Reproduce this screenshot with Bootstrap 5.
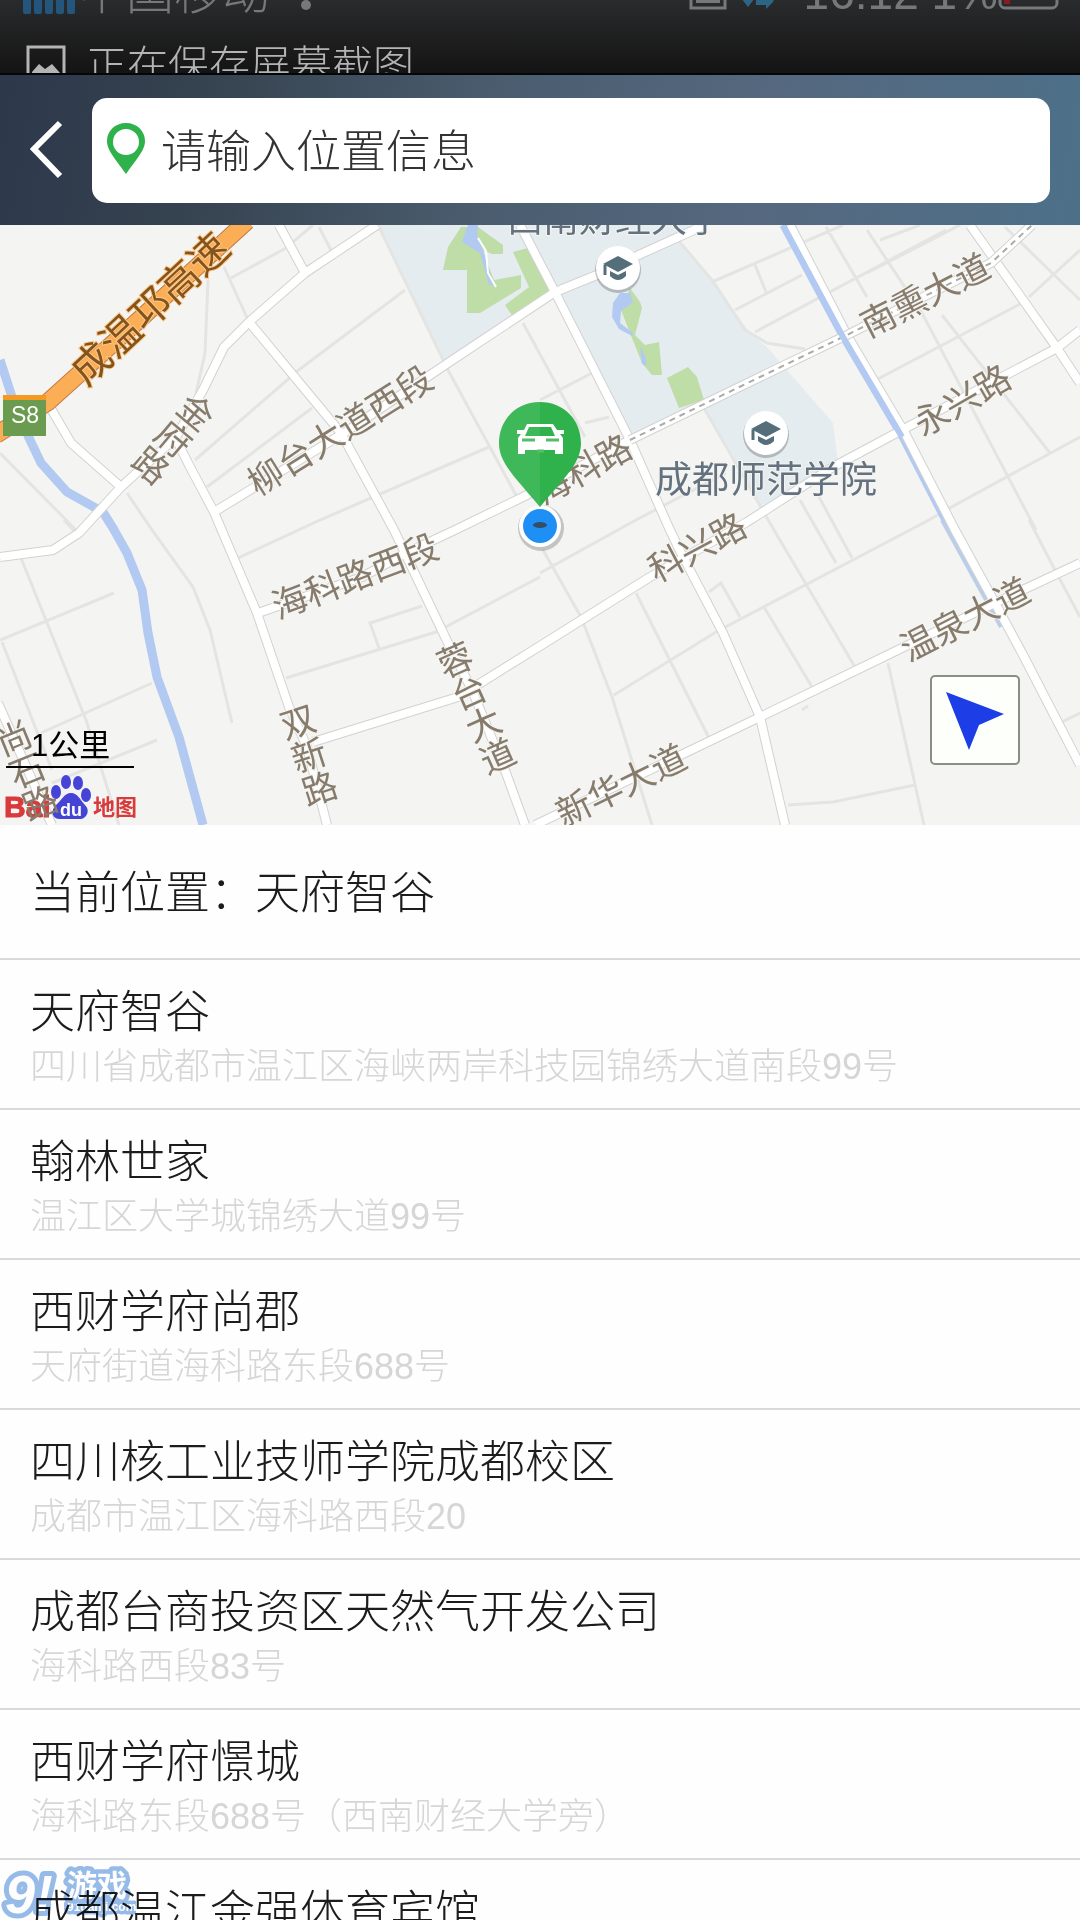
<!DOCTYPE html>
<html lang="zh-CN">
<head>
<meta charset="utf-8">
<meta name="viewport" content="width=device-width, initial-scale=1">
<title>位置选择</title>
<link rel="stylesheet" href="https://cdn.jsdelivr.net/npm/bootstrap@5.3.0/dist/css/bootstrap.min.css">
<style>
  body { font-family: "Liberation Sans", "Noto Sans CJK SC", sans-serif; font-weight: 300; color: #1c1c1c; background: #fefefe; }
  .statusbar { height: 75px; background: linear-gradient(#2a2b2d, #141414); border-bottom: 2px solid #050608; }
  .status-line { height: 54px; margin-top: -34px; padding: 0 20px 0 22px; font-size: 46px; line-height: 54px; color: #77787a; }
  .carrier { font-size: 48px; }
  .notice-line { height: 60px; margin-top: 16px; padding: 0 26px; gap: 20px; font-size: 41px; line-height: 60px; color: #b4b4b4; }
  .topbar { height: 150px; padding: 0 30px; gap: 28px; background: linear-gradient(100deg, #2d384b 0%, #35424f 18%, #4a5c6e 45%, #55687f 70%, #4d7089 100%); }
  .search-box { height: 105px; padding: 0 15px; gap: 16px; border-radius: 15px; background: #fff; }
  .search-field { height: 66px; font-size: 45px; line-height: 60px; font-weight: 300; color: #333; }
  .search-box .search-field { padding: 6px 0 0; }
  .search-field::placeholder { color: #333; opacity: 1; }
  .map-view svg.map-art { width: 100%; height: auto; }
  .map-art text { font-size: 35px; font-weight: 400; }
  .road-case { fill: none; stroke: #d2d2d0; stroke-linejoin: round; }
  .road-fill { fill: none; stroke: #fff; stroke-linejoin: round; }
  .lane { fill: none; stroke: #e4e4e2; stroke-width: 3; }
  .road-name { fill: #877b6c; stroke: #f4f4f2; stroke-width: 2; paint-order: stroke; text-anchor: middle; }
  .place-name { fill: #64717f; stroke: #f4f4f2; stroke-width: 2; paint-order: stroke; text-anchor: middle; }
  .map-art .scale-text { font-size: 31px; fill: #000; }
  .locate-btn { position: absolute; right: 60px; bottom: 60px; width: 90px; height: 90px; border: 2px solid #8c8d84; border-radius: 5px; background: #fdfffa; }
  .here { height: 135px; padding: 5px 30px 0; font-size: 45px; line-height: 54px; border-bottom: 2px solid #d9d9d9; }
  .place-row { padding: 26px 30px 14px; border-bottom: 2px solid #d9d9d9; color: #1c1c1c; }
  .place-title { font-size: 45px; line-height: 54px; }
  .place-addr { font-size: 36px; line-height: 54px; color: #d6d6d6; }
  .site-mark { position: absolute; left: 0; bottom: 0; mix-blend-mode: multiply; }
</style>
<script src="https://cdn.jsdelivr.net/npm/bootstrap@5.3.0/dist/js/bootstrap.bundle.min.js"></script>
</head>
<body>
<div class="vh-100 overflow-hidden position-relative">

  <div class="statusbar overflow-hidden">
    <div class="status-line d-flex align-items-center justify-content-between">
      <div class="d-flex align-items-center">
        <svg width="56" height="54" viewBox="0 0 56 54" fill="#24557c"><rect x="1" y="10" width="8" height="38" rx="2"/><rect x="12" y="10" width="8" height="38" rx="2"/><rect x="23" y="10" width="8" height="38" rx="2"/><rect x="34" y="10" width="8" height="38" rx="2"/><rect x="45" y="10" width="8" height="38" rx="2"/></svg>
        <span class="carrier">中国移动</span>
        <svg class="ms-3" width="30" height="54" viewBox="0 0 30 54" fill="#77787a"><circle cx="20" cy="39" r="5"/></svg>
      </div>
      <div class="d-flex align-items-center">
        <svg width="92" height="54" viewBox="0 0 92 54"><path d="M3 8h34v34H3z" fill="none" stroke="#77787a" stroke-width="3"/><path d="M8 10h24v27H8z" fill="#77787a"/><path d="M50 28h20l-10 13zM68 33h10v-6l8 8-8 8v-4H68z" fill="#2d6585"/></svg>
        <span class="ms-4">16:12 1%</span>
        <svg width="62" height="54" viewBox="0 0 62 54"><rect x="2" y="12" width="57" height="30" rx="5" fill="none" stroke="#77787a" stroke-width="3"/><path d="M6 16h6v22H6z" fill="#8b1a22"/></svg>
      </div>
    </div>
    <div class="notice-line d-flex">
      <svg class="mt-2" width="40" height="44" viewBox="0 0 40 44"><path d="M2 3h36v36H2z" fill="none" stroke="#b4b4b4" stroke-width="3"/><path d="M6 34v-6l7-8 6 5 7-5 8 9v5z" fill="#b4b4b4"/></svg>
      <span>正在保存屏幕截图</span>
    </div>
  </div>

  <header class="topbar d-flex align-items-center">
    <a href="#" aria-label="返回" class="d-flex">
      <svg width="34" height="60" viewBox="0 0 34 60"><path d="M30 3L4 29l26 27" fill="none" stroke="#fff" stroke-width="6"/></svg>
    </a>
    <div class="search-box d-flex align-items-center flex-grow-1">
      <label for="place-search" class="d-flex" aria-label="位置">
        <svg width="38" height="56" viewBox="0 0 38 56"><path fill="#2fb24c" fill-rule="evenodd" d="M19 1C8 1 0 9 0 19c0 9 7 16 19 33 12-17 19-24 19-33C38 9 30 1 19 1zm0 6a13 13 0 1 1 0 26 13 13 0 0 1 0-26z"/></svg>
      </label>
      <input id="place-search" type="text" class="search-field form-control border-0 shadow-none bg-transparent" placeholder="请输入位置信息">
    </div>
  </header>

  <section class="map-view position-relative overflow-hidden">
    <svg class="map-art d-block" viewBox="0 0 1080 600">
      <defs>
        <g id="school">
          <circle cy="2" r="23" fill="#000" opacity=".22"/><circle r="22" fill="#fff"/>
          <path d="M-15-4L0-12 15-4 0 4z" fill="#546e7a"/><path d="M-8 3v5q8 8 16 0V3L0 7z" fill="#546e7a"/><path d="M-13-3v10" stroke="#546e7a" stroke-width="3"/>
        </g>
        <g id="streets">
          <path d="M377 0L305 48 249 97 224 122 203 165 176 212 121 262 79 308 53 325 0 332M279 0L305 48"/>
          <path d="M249 97L293 150 341 208 365 252 394 305 448 418 472 465 506 548 525 600"/>
          <path d="M214 287L255 262 344 208 448 138 555 67 597 50 643 28 705 0"/>
          <path d="M176 214L189 240 214 287 257 388 289 482 307 522 327 600M50 182L71 218 121 262"/>
          <path d="M258 388L362 352 406 328 455 305 523 272 630 215"/>
          <path d="M520 0L555 67 630 215 669 303 681 328 723 408 760 492 785 600"/>
          <path d="M313 517L458 472 540 421 650 352 747 297 833 242 902 205 1057 123 1080 105"/>
          <path d="M790 0L848 112 905 208 955 305 995 378 1022 428 1080 540M970 0L1057 123 1080 158"/>
          <path d="M535 600L685 528 760 492 902 423 995 378 1080 338M-2 478L52 600"/>
        </g>
      </defs>
      <rect width="1080" height="600" fill="#f4f4f2"/>
      <path fill="#e4ecf0" d="M378 0L446 137 555 67 630 215 704 182 740 242 760 282 838 237 833 198 767 122 750 108 712 55 678 15 702 0z"/>
      <path fill="#bfdda6" d="M461 2L448 22 443 45H467V88H480L521 63V50L494 55 482 25 492 29H503V20L478 2zM513 27L532 22 540 45 552 68 513 92 505 80 529 62zM630 63L640 77 642 83 635 110 645 120 659 117 662 150H652L642 138 630 108 621 85zM667 153L688 142 697 152 704 175 679 183z"/>
      <path fill="#b2c9f1" d="M468 0h10l-1 11 6 14 6 18 4 18-4-1-9-32-18-11z"/>
      <path d="M478 13L486 26 488 48 496 62" fill="none" stroke="#fff" stroke-width="2"/>
      <path fill="#b2c9f1" d="M620 68h10l3 9-12 9-1 12 13 10-1 3-13-7-7-12 1-14zM640 121l6 12v8l-4-2z"/>
      <path d="M0 135L12 172 29 213 41 238 67 267 103 287 113 303 127 328 142 365 148 408 157 452 179 512 203 600" fill="none" stroke="#b2c9f1" stroke-width="9"/>

      <g class="lane">
        <path d="M231 53L286 23 313 0M224 42L249 97M319 2L332 27M208 55L205 128 196 168M296 147L405 65M195 235L293 150M207 262L312 183M378 0L448 145 517 272M238 333L320 295 489 222"/>
        <path d="M0 228L76 305M127 268L152 305 193 362 210 405 232 498M21 333L86 495 119 600M0 415L114 368M2 417L52 545M41 508L152 458M52 558L157 515M286 453L436 407 540 352M379 423L370 398 422 381M64 295L76 308"/>
        <path d="M540 348L636 295 726 248M543 325L581 392 612 472 652 600M614 470L716 407 929 295 946 285 1080 212M636 368L709 513M764 382L812 462M704 183L774 305 855 442M709 367L721 358 740 392M800 275L836 338M818 270L852 333"/>
        <path d="M888 438L924 600M788 580L833 577 915 560M1029 295L1055 345 1080 392M1060 498L1080 488M802 485L808 481"/>
        <path d="M678 15L712 55 745 105 767 118 805 124M712 57L843 0M735 85L802 50M755 107L946 5M755 40L766 67M826 2L867 72M867 5L922 88 1036 305M876 155L1022 78M942 90L1050 228M1005 2L1080 75M1029 72L1080 25M523 98L585 212M540 175L592 148M585 198L609 192M867 48L960 0M880 15L920 0"/>
      </g>
      <path d="M783 0L843 112 902 212 950 305" fill="none" stroke="#b2c9f1" stroke-width="7"/>
      <path d="M942 295L1001 402" fill="none" stroke="#b9cfe9" stroke-width="4"/>
      <use href="#streets" class="road-case" stroke-width="10"/>
      <use href="#streets" class="road-fill" stroke-width="8"/>
      <path class="road-case" stroke-width="10" d="M630 215L760 152 847 110 991 38 1032 0"/>
      <path class="road-fill" stroke-width="8" d="M630 215L760 152 847 110 991 38 1032 0"/>
      <path d="M630 215L760 152 847 110 991 38 1032 0" fill="none" stroke="#aaa" stroke-width="2" stroke-dasharray="6 5"/>
      <path d="M783 0L843 112 902 212" fill="none" stroke="#b2c9f1" stroke-width="6"/>
      <path d="M247-4L140 94 48 177-4 210" fill="none" stroke="#c07a45" stroke-width="18"/>
      <path d="M247-4L140 94 48 177-4 210" fill="none" stroke="#fcae56" stroke-width="16"/>

      <path fill="#6a9b4e" d="M3 170h43v41H3z"/><path fill="#f49a22" d="M3 170h43v5H3z"/>
      <text x="25" y="198" text-anchor="middle" fill="#fff" style="font-size:23px">S8</text>

      <text transform="translate(150 84) rotate(-43)" y="14" text-anchor="middle" fill="#85541c" stroke="#fcc98a" stroke-width="2" paint-order="stroke" style="font-size:40px">成温邛高速</text>
      <g class="road-name">
        <text transform="translate(340 205) rotate(-32)" y="13">柳台大道西段</text>
        <text transform="translate(355 351) rotate(-21)" y="13">海科路西段</text>
        <text transform="translate(583 244) rotate(-29)" y="13">海科路</text>
        <text transform="translate(697 322) rotate(-28)" y="13">科兴路</text>
        <text transform="translate(925 70) rotate(-27)" y="13">南熏大道</text>
        <text transform="translate(962 175) rotate(-30)" y="13">永兴路</text>
        <text transform="translate(965 394) rotate(-27)" y="13">温泉大道</text>
        <text transform="translate(621 560) rotate(-26)" y="13">新华大道</text>
        <text transform="translate(196 187) rotate(40)" y="13">金<tspan x="0" dy="35">府</tspan><tspan x="0" dy="35">路</tspan></text>
        <text transform="translate(298 497) rotate(-18)" y="13">双<tspan x="0" dy="35">新</tspan><tspan x="0" dy="35">路</tspan></text>
        <text transform="translate(455 435) rotate(-24)" y="13">蓉<tspan x="0" dy="35">台</tspan><tspan x="0" dy="35">大</tspan><tspan x="0" dy="35">道</tspan></text>
      </g>
      <g class="place-name">
        <text x="615" y="7" style="font-size:36px">西南财经大学</text>
        <text x="766" y="268" style="font-size:37px">成都师范学院</text>
      </g>
      <use href="#school" x="618" y="43"/>
      <use href="#school" x="766" y="208"/>

      <circle cx="541" cy="303" r="23" fill="#000" opacity=".2"/>
      <circle cx="540" cy="301" r="21" fill="#fff"/><circle cx="540" cy="301" r="17" fill="#1e90f5"/>
      <ellipse cx="540" cy="300" rx="7" ry="3" fill="#334e68"/>
      <path fill="#2fb24c" d="M540 177c-24 0-41 18-41 41 0 20 16 34 41 64 25-30 41-44 41-64 0-23-17-41-41-41z"/>
      <path fill="#fff" opacity=".08" d="M540 177c-24 0-41 18-41 41 0 20 16 34 41 64z"/>
      <path fill="#fff" fill-rule="evenodd" d="M527 199h26l4 6h7v4h-4l3 4v16h-8v-4h-30v4h-7v-16l3-4h-4v-4h7zm2 3l-4 9h30l-4-9z"/>
      <path d="M522 215h13M546 215h13M537 226h7" fill="none" stroke="#54bd68" stroke-width="3"/>

      <g>
        <text x="4" y="592" fill="#d93a3c" stroke="#d93a3c" style="font-size:30px;font-weight:700">Bai</text>
        <g fill="#4544d6"><ellipse cx="56" cy="567" rx="5" ry="7"/><ellipse cx="66" cy="557" rx="5" ry="7"/><ellipse cx="78" cy="558" rx="5" ry="7"/><ellipse cx="86" cy="570" rx="5" ry="7"/><path d="M71 568c7 0 9 7 14 12 6 6 1 14-5 14H60c-8 0-10-8-4-14 6-5 8-12 15-12z"/></g>
        <text x="71" y="591" text-anchor="middle" fill="#fff" style="font-size:18px;font-weight:700">du</text>
        <text x="93" y="590" fill="#d93a3c" style="font-size:22px;font-weight:700">地图</text>
      </g>
      <text class="road-name" transform="translate(14 513) rotate(-22)" y="13" stroke-opacity="0">尚<tspan x="0" dy="35">石</tspan><tspan x="0" dy="35">路</tspan></text>
      <path d="M6 542h128" stroke="#000" stroke-width="2"/>
      <text class="scale-text" x="31" y="531">1公里</text>
    </svg>
    <button type="button" class="locate-btn p-0 d-flex" aria-label="定位">
      <svg width="86" height="86" viewBox="0 0 86 86"><path fill="#1d3de6" d="M14 15L72 37 47 48 37 73z"/></svg>
    </button>
  </section>

  <main>
    <div class="here d-flex align-items-center">当前位置：天府智谷</div>
    <div class="list-group list-group-flush">
      <a href="#" class="place-row d-block text-decoration-none"><div class="place-title">天府智谷</div><div class="place-addr">四川省成都市温江区海峡两岸科技园锦绣大道南段99号</div></a>
      <a href="#" class="place-row d-block text-decoration-none"><div class="place-title">翰林世家</div><div class="place-addr">温江区大学城锦绣大道99号</div></a>
      <a href="#" class="place-row d-block text-decoration-none"><div class="place-title">西财学府尚郡</div><div class="place-addr">天府街道海科路东段688号</div></a>
      <a href="#" class="place-row d-block text-decoration-none"><div class="place-title">四川核工业技师学院成都校区</div><div class="place-addr">成都市温江区海科路西段20</div></a>
      <a href="#" class="place-row d-block text-decoration-none"><div class="place-title">成都台商投资区天然气开发公司</div><div class="place-addr">海科路西段83号</div></a>
      <a href="#" class="place-row d-block text-decoration-none"><div class="place-title">西财学府憬城</div><div class="place-addr">海科路东段688号（西南财经大学旁）</div></a>
      <a href="#" class="place-row d-block text-decoration-none"><div class="place-title">成都温江金强体育宾馆</div></a>
    </div>
  </main>

  <svg class="site-mark" width="136" height="54" viewBox="0 0 136 54">
    <g fill="#fff" stroke="#98bce9" stroke-linejoin="round" paint-order="stroke" font-weight="700">
      <text x="67" y="45" stroke-width="7" style="font-size:12px">91danji.com</text>
      <text x="67" y="30" stroke-width="9" style="font-size:30px">游戏</text>
      <text x="5" y="47" stroke-width="10" font-style="italic" style="font-size:54px">9</text>
      <text x="36" y="45" stroke-width="10" font-style="italic" style="font-size:50px">!</text>
    </g>
  </svg>
</div>
</body>
</html>
